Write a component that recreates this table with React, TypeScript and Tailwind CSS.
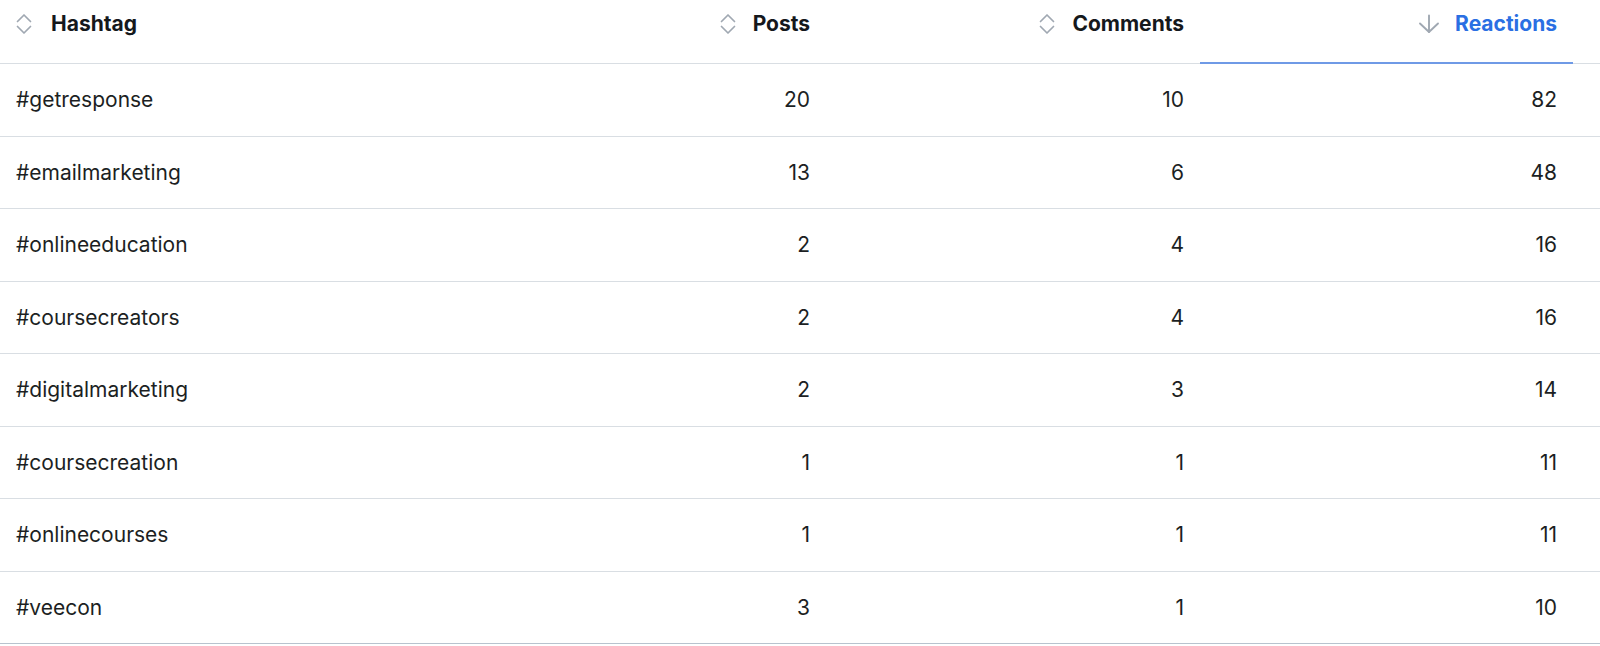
import React from "react";

const rows = [
  { tag: "#getresponse", posts: 20, comments: 10, reactions: 82 },
  { tag: "#emailmarketing", posts: 13, comments: 6, reactions: 48 },
  { tag: "#onlineeducation", posts: 2, comments: 4, reactions: 16 },
  { tag: "#coursecreators", posts: 2, comments: 4, reactions: 16 },
  { tag: "#digitalmarketing", posts: 2, comments: 3, reactions: 14 },
  { tag: "#coursecreation", posts: 1, comments: 1, reactions: 11 },
  { tag: "#onlinecourses", posts: 1, comments: 1, reactions: 11 },
  { tag: "#veecon", posts: 3, comments: 1, reactions: 10 },
];

function SortIcon() {
  return (
    <svg width="16" height="22" viewBox="0 0 16 22" fill="none" stroke="#a0a8b2" strokeWidth="1.7" strokeLinecap="round" strokeLinejoin="round">
      <path d="M1.5 8.5l6.5-6.5 6.5 6.5" />
      <path d="M1.5 13.5l6.5 6.5 6.5-6.5" />
    </svg>
  );
}

function ArrowDownIcon() {
  return (
    <svg width="22" height="20" viewBox="0 0 22 20" fill="none" stroke="#a0a8b2" strokeWidth="1.9" strokeLinecap="round" strokeLinejoin="round">
      <path d="M11 1.5v16.5" />
      <path d="M2 9.5l9 8.5 9-8.5" />
    </svg>
  );
}

export default function App() {
  return (
    <div className="w-[1600px] h-[646px] bg-white text-[#1c1f23] overflow-hidden" style={{ fontFamily: "Inter, 'Noto Sans', sans-serif" }}>
      <div className="grid grid-cols-[452px_374px_374px_373px_1fr] h-[64px] border-b border-[#d9dee3]">
        <div className="flex items-center h-[48px] gap-[19px] pl-[16px]">
          <SortIcon />
          <span className="text-[21px] font-bold text-[#15181c]">Hashtag</span>
        </div>
        <div className="flex items-center h-[48px] justify-end gap-[17px] pr-[16px]">
          <SortIcon />
          <span className="text-[21px] font-bold text-[#15181c]">Posts</span>
        </div>
        <div className="flex items-center h-[48px] justify-end gap-[17px] pr-[16px]">
          <SortIcon />
          <span className="text-[21px] font-bold text-[#15181c]">Comments</span>
        </div>
        <div className="relative">
          <div className="flex items-center h-[48px] justify-end gap-[15px] pr-[16px]">
            <ArrowDownIcon />
            <span className="text-[21px] font-bold text-[#2a6fe3]">Reactions</span>
          </div>
          <div className="absolute left-0 right-0 -bottom-px h-[2px] bg-[#6f9ae6]" />
        </div>
        <div />
      </div>
      {rows.map((r, i) => (
        <div
          key={r.tag}
          className={`grid grid-cols-[452px_374px_374px_373px_1fr] h-[72.5px] items-center text-[21px] border-b ${i === rows.length - 1 ? "border-[#b8c3ce]" : "border-[#d9dee3]"}`}
        >
          <div className="pl-[16px]">{r.tag}</div>
          <div className="text-right pr-[16px]">{r.posts}</div>
          <div className="text-right pr-[16px]">{r.comments}</div>
          <div className="text-right pr-[16px]">{r.reactions}</div>
          <div />
        </div>
      ))}
    </div>
  );
}
